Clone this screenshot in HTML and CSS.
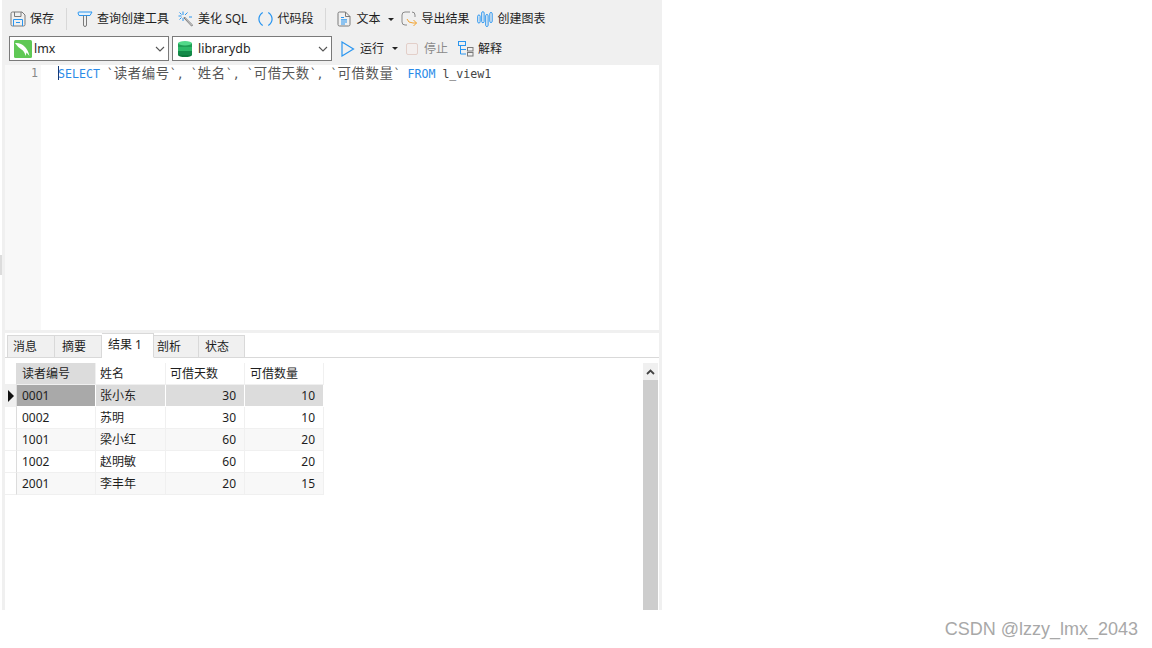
FILE: index.html
```html
<!DOCTYPE html>
<html lang="zh">
<head>
<meta charset="utf-8">
<title>查询</title>
<link rel="stylesheet" href="styles.css">
</head>
<body>
<div class="window">
  <div class="toolbar">
    <div class="bar bar-top">
      <div class="tool">
        <svg class="icon" viewBox="0 0 16 16" fill="none"><path d="M1 2.5 Q1 1 2.5 1 H12 L15 4 V13.5 Q15 15 13.5 15 H2.5 Q1 15 1 13.5 Z" stroke="#7a7a7a"/><path d="M4.5 1 V5.5 H11 V1" stroke="#7a7a7a"/><path d="M3.5 15 V8.5 H12.5 V15" stroke="#2a96f0"/><path d="M6 11.5 H10" stroke="#2a96f0"/></svg>
        <span>保存</span>
      </div>
      <i class="sep sep-a"></i>
      <div class="tool">
        <svg class="icon" viewBox="0 0 16 16" fill="none"><path d="M1 2 Q1 1 2 1 H15 L13 4.5 H2 Z" stroke="#2a96f0" fill="#e4f2fd"/><path d="M6.5 4.5 V14 Q6.5 15.5 8 15.5 Q9.5 15.5 9.5 14 V4.5" stroke="#7a7a7a"/></svg>
        <span>查询创建工具</span>
      </div>
      <div class="tool gap-9">
        <svg class="icon" viewBox="0 0 16 16" fill="none"><path d="M6.5 6 L14 13.5 Q15 15 13.5 15 L6 7 Z" stroke="#7a7a7a"/><path d="M5 0.5 V4 M5 7 V10 M0.5 5 H3.5 M7 4 L9.5 1.5 M1.5 1.5 L3.5 3.5 M1.5 8.5 L3.5 6.5 M11 6 H14" stroke="#2a96f0"/></svg>
        <span>美化 SQL</span>
      </div>
      <div class="tool gap-11">
        <svg class="icon icon-paren" viewBox="0 0 16 16" fill="none"><path d="M5 1 Q1 4 1 8 Q1 12 5 15 M11 1 Q15 4 15 8 Q15 12 11 15" stroke="#2a96f0" stroke-width="1.3"/></svg>
        <span>代码段</span>
      </div>
      <i class="sep sep-b"></i>
      <div class="tool">
        <svg class="icon" viewBox="0 0 16 16" fill="none"><path d="M2 2.5 Q2 1 3.5 1 H9.5 L14 5.5 V13.5 Q14 15 12.5 15 H3.5 Q2 15 2 13.5 Z" stroke="#7a7a7a"/><path d="M9.5 1 V5.5 H14" stroke="#7a7a7a"/><path d="M5 6.5 H8 M5 8.8 H11 M5 11 H11 M5 13 H9" stroke="#2a96f0" stroke-width="1.2"/></svg>
        <span>文本</span>
        <i class="caret caret-a"></i>
      </div>
      <div class="tool gap-7">
        <svg class="icon" viewBox="0 0 16 16" fill="none"><path d="M9 1 H4 Q1 1 1 4 V11 Q1 14 4 14 H6 M11 1 Q14 1 14 4 V6" stroke="#8a8a8a"/><path d="M6 8 Q7 12 12 12 H15.5 M12.5 9 L15.5 12 L12.5 15" stroke="#f3a32f"/></svg>
        <span>导出结果</span>
      </div>
      <div class="tool gap-8">
        <svg class="icon" viewBox="0 0 16 16" fill="none"><rect x="0.7" y="4" width="2.4" height="8" rx="1.2" stroke="#2a96f0"/><rect x="4.7" y="0.7" width="2.4" height="11" rx="1.2" stroke="#2a96f0"/><rect x="8.7" y="3.5" width="2.4" height="12" rx="1.2" stroke="#2a96f0"/><rect x="12.8" y="1.5" width="2.4" height="10" rx="1.2" stroke="#2a96f0"/></svg>
        <span>创建图表</span>
      </div>
    </div>
    <div class="bar bar-bottom">
      <div class="combo">
        <svg class="combo-icon" viewBox="0 0 18 18"><rect width="18" height="18" rx="1.5" fill="#5fc855"/><path d="M1 3 Q7 2.5 11 7 Q14 10 15.5 16 L12.5 12.5 L11.5 16 Q10.5 11 7.5 9.5 Q4 7.5 1 3 Z" fill="#fff"/></svg>
        <span class="combo-text">lmx</span>
        <svg class="chev" viewBox="0 0 10 6" fill="none"><path d="M1 1 L5 5 L9 1" stroke="#555" stroke-width="1.1"/></svg>
      </div>
      <div class="combo combo-second">
        <svg class="combo-icon db" viewBox="0 0 14 16"><rect y="2" width="14" height="12" fill="#1f9e55"/><ellipse cx="7" cy="14" rx="7" ry="2" fill="#0c7a3c"/><rect y="6" width="14" height="4" fill="#2db868"/><rect y="10" width="14" height="4" fill="#128a48"/><ellipse cx="7" cy="2.3" rx="7" ry="2.2" fill="#52d88a"/></svg>
        <span class="combo-text">librarydb</span>
        <svg class="chev" viewBox="0 0 10 6" fill="none"><path d="M1 1 L5 5 L9 1" stroke="#555" stroke-width="1.1"/></svg>
      </div>
      <div class="tool run">
        <svg class="icon" viewBox="0 0 16 16" fill="none"><path d="M2 1 L13.5 8 L2 15 Z" stroke="#2a96f0" stroke-width="1.2"/></svg>
        <span>运行</span>
        <i class="caret caret-a"></i>
      </div>
      <div class="tool stop">
        <i class="stop-box"></i>
        <span>停止</span>
      </div>
      <div class="tool gap-10">
        <svg class="icon" viewBox="0 0 16 16" fill="none"><rect x="0.5" y="0.5" width="7" height="4" stroke="#2a96f0"/><path d="M2.5 4.5 V13 H8 M2.5 8.5 H8" stroke="#2a96f0"/><rect x="9.5" y="6.5" width="5.5" height="3.5" stroke="#7a7a7a"/><rect x="9.5" y="11.5" width="5.5" height="3.5" stroke="#7a7a7a"/></svg>
        <span>解释</span>
      </div>
    </div>
  </div>

  <div class="body">
    <i class="handle"></i>
    <div class="main">
      <div class="editor">
        <div class="gutter">1</div>
        <div class="code"><i class="cursor"></i><span class="kw">SELECT</span> `<span class="cjk">读者编号</span>`, `<span class="cjk">姓名</span>`, `<span class="cjk">可借天数</span>`, `<span class="cjk">可借数量</span>` <span class="kw">FROM</span> <span class="name">l_view1</span></div>
      </div>
      <div class="results">
        <div class="tabs">
          <div class="tab tab-first">消息</div>
          <div class="tab">摘要</div>
          <div class="tab tab-active">结果 1</div>
          <div class="tab tab-narrow">剖析</div>
          <div class="tab tab-last">状态</div>
        </div>
        <div class="grid-area">
          <div class="grid">
            <div class="row head">
              <div class="mark"></div><div class="cell cell-sel">读者编号</div><div class="cell tight">姓名</div><div class="cell tight">可借天数</div><div class="cell">可借数量</div>
            </div>
            <div class="row row-sel">
              <div class="mark"><i class="arrow"></i></div><div class="cell cell-cur">0001</div><div class="cell tight">张小东</div><div class="cell num">30</div><div class="cell num">10</div>
            </div>
            <div class="row">
              <div class="mark"></div><div class="cell">0002</div><div class="cell tight">苏明</div><div class="cell num">30</div><div class="cell num">10</div>
            </div>
            <div class="row row-alt">
              <div class="mark"></div><div class="cell">1001</div><div class="cell tight">梁小红</div><div class="cell num">60</div><div class="cell num">20</div>
            </div>
            <div class="row">
              <div class="mark"></div><div class="cell">1002</div><div class="cell tight">赵明敏</div><div class="cell num">60</div><div class="cell num">20</div>
            </div>
            <div class="row row-alt">
              <div class="mark"></div><div class="cell">2001</div><div class="cell tight">李丰年</div><div class="cell num">20</div><div class="cell num">15</div>
            </div>
          </div>
          <div class="scrollbar">
            <div class="scroll-btn"><svg class="scroll-arrow" viewBox="0 0 9 6" fill="none"><path d="M1 5 L4.5 1.5 L8 5" stroke="#444" stroke-width="1.8"/></svg></div>
            <div class="scroll-thumb"></div>
          </div>
        </div>
      </div>
    </div>
  </div>
</div>
<div class="footer">CSDN @lzzy_lmx_2043</div>
</body>
</html>
```

FILE: styles.css
```css
* { box-sizing: border-box; }
html, body { margin: 0; padding: 0; background: #fff; }
body {
  width: 1152px;
  height: 648px;
  overflow: hidden;
  font-family: "Noto Sans", "Noto Sans CJK SC", sans-serif;
  font-size: 12px;
  color: #1e1e1e;
}
.window {
  width: 662px;
  height: 610px;
  padding-left: 2px;
  display: flex;
  flex-direction: column;
  background: #f0f0f0;
  background-clip: content-box;
}
.toolbar {
  height: 65px;
  flex: none;
  padding-top: 7px;
}
.bar { display: flex; align-items: center; }
.bar-top { height: 24px; padding-left: 8px; }
.bar-bottom { height: 25px; margin-top: 5px; padding-left: 7px; }
.tool { display: flex; align-items: center; gap: 4px; white-space: nowrap; line-height: 16px; }
.icon { width: 16px; height: 16px; flex: none; }
.icon-paren { width: 15px; }
.gap-7 { margin-left: 7px; }
.gap-8 { margin-left: 8px; }
.gap-9 { margin-left: 9px; }
.gap-10 { margin-left: 10px; }
.gap-11 { margin-left: 11px; }
.sep { display: block; width: 1px; height: 22px; background: #d8d8d8; flex: none; }
.sep-a { margin: 0 10px 0 12px; }
.sep-b { margin: 0 10px 0 12px; }
.caret {
  display: block;
  width: 0;
  height: 0;
  border-left: 3px solid transparent;
  border-right: 3px solid transparent;
  border-top: 3px solid #222;
}
.caret-a { margin-left: 4px; }

.combo {
  width: 160px;
  height: 25px;
  background: #fff;
  border: 1px solid #7a7a7a;
  display: flex;
  align-items: center;
  padding: 0 3px 0 4px;
  flex: none;
}
.combo-second { margin-left: 3px; }
.combo-icon { width: 18px; height: 18px; flex: none; }
.combo-icon.db { width: 14px; height: 16px; margin-left: 1px; }
.combo-text { margin-left: 2px; flex: 1; font-size: 12.4px; }
.combo-second .combo-text { margin-left: 6px; }
.chev { width: 10px; height: 6px; flex: none; }
.run { margin-left: 8px; }
.stop { margin-left: 8px; color: #8a8a8a; gap: 6px; }
.stop-box {
  display: block;
  width: 12px;
  height: 12px;
  border: 1px solid #e3cfc9;
  border-radius: 2px;
  background: #f3efee;
}

.body { flex: 1; display: flex; min-height: 0; position: relative; }
.handle {
  position: absolute;
  left: -2px;
  top: 190px;
  width: 2px;
  height: 20px;
  background: #dcdcdc;
}
.main {
  flex: 1;
  margin: 0 3px 0 3px;
  display: flex;
  flex-direction: column;
  min-width: 0;
  background: #fff;
}
.editor {
  height: 265px;
  flex: none;
  display: flex;
  background: #fff;
}
.gutter {
  width: 36px;
  flex: none;
  background: #f8f8f8;
  text-align: right;
  padding: 1px 3px 0 0;
  font-family: "DejaVu Sans Mono", monospace;
  font-size: 11.6px;
  line-height: 14px;
  color: #888;
}
.code {
  position: relative;
  padding: 1px 0 0 17px;
  font-family: "DejaVu Sans Mono", monospace;
  font-size: 11.6px;
  line-height: 14px;
  color: #555;
  white-space: pre;
}
.cursor {
  position: absolute;
  left: 17px;
  top: 1px;
  width: 1px;
  height: 14px;
  background: #123a78;
}
.kw { color: #2a8be8; }
.name { color: #444; }
.cjk {
  font-family: "Noto Sans CJK SC", sans-serif;
  font-size: 13.4px;
  line-height: 1;
  letter-spacing: 0.6px;
  color: #555;
}

.results {
  flex: 1;
  min-height: 0;
  display: flex;
  flex-direction: column;
  border-top: 3px solid #f0f0f0;
}
.tabs {
  height: 25px;
  flex: none;
  display: flex;
  align-items: flex-end;
  border-bottom: 1px solid #d9d9d9;
  padding-left: 2px;
}
.tab {
  width: 47px;
  height: 23px;
  margin-bottom: -1px;
  background: #f0f0f0;
  border: 1px solid #d9d9d9;
  border-left: 0;
  padding-left: 7px;
  line-height: 22px;
}
.tab-first { width: 48px; border-left: 1px solid #d9d9d9; padding-left: 5px; }
.tab-active {
  width: 52px;
  height: 25px;
  background: #fff;
  border-bottom: 1px solid #fff;
  padding-left: 6px;
  line-height: 22px;
}
.tab-narrow { width: 45px; padding-left: 3px; }
.tab-last { width: 46px; padding-left: 6px; }
.grid-area {
  flex: 1;
  min-height: 0;
  display: flex;
  justify-content: space-between;
  padding: 5px 1px 0 0;
}
.grid { width: 319px; }
.row {
  display: grid;
  grid-template-columns: 12px 79px 70px 79px 79px;
  height: 22px;
  background: #fff;
}
.mark {
  border-right: 1px solid #dcdcdc;
  border-bottom: 1px solid #f0f0f0;
  background: #fff;
  display: flex;
  align-items: center;
  padding-left: 3px;
}
.row-sel .mark { background: #f0f0f0; }
.arrow {
  display: block;
  width: 0;
  height: 0;
  border-top: 6px solid transparent;
  border-bottom: 6px solid transparent;
  border-left: 6px solid #111;
}
.cell {
  padding: 0 5px;
  line-height: 21px;
  border-right: 1px solid #f0f0f0;
  border-bottom: 1px solid #f0f0f0;
  white-space: nowrap;
  overflow: hidden;
}
.tight { padding-left: 4px; }
.num { text-align: right; padding-right: 8px; }
.head .cell-sel { background: #dcdcdc; }
.row-sel { background: #dcdcdc; }
.row-sel .cell { border-color: #fff; }
.row-sel .cell-cur { background: #a9a9a9; }
.row-alt { background: #f8f8f8; }
.scrollbar {
  width: 15px;
  flex: none;
  display: flex;
  flex-direction: column;
}
.scroll-btn {
  height: 17px;
  flex: none;
  background: #f0f0f0;
  display: flex;
  align-items: center;
  justify-content: center;
}
.scroll-arrow { width: 9px; height: 6px; }
.scroll-thumb { flex: 1; background: #cdcdcd; }
.footer {
  height: 38px;
  padding: 9px 14px 0 0;
  text-align: right;
  font-family: "Liberation Sans", sans-serif;
  font-size: 18px;
  line-height: 20px;
  color: #a8a8a8;
}
```
